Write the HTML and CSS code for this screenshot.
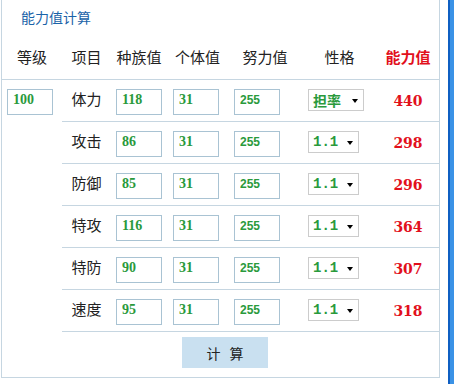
FILE: index.html
```html
<!DOCTYPE html>
<html>
<head>
    <title>能力值计算</title>
	<link rel="stylesheet" href="styles.css">
</head>
<body>
	<div class="page">
		<div class="panel">
			<div class="title">能力值计算</div>
			<div class="calc">
				<div class="hd">等级</div>
				<div class="hd">项目</div>
				<div class="hd">种族值</div>
				<div class="hd">个体值</div>
				<div class="hd">努力值</div>
				<div class="hd">性格</div>
				<div class="hd red">能力值</div>

				<div class="lv"><input class="num serif" value="100"></div>

				<div class="name">体力</div>
				<div class="c3"><input class="num serif" value="118"></div>
				<div class="c4"><input class="num serif" value="31"></div>
				<div class="c5"><input class="num sans" value="255"></div>
				<div class="c6"><div class="sel wide"><span class="cn">担率</span></div></div>
				<div class="val">440</div>

				<div class="name">攻击</div>
				<div class="c3"><input class="num serif" value="86"></div>
				<div class="c4"><input class="num serif" value="31"></div>
				<div class="c5"><input class="num sans" value="255"></div>
				<div class="c6"><div class="sel">1.1</div></div>
				<div class="val">298</div>

				<div class="name">防御</div>
				<div class="c3"><input class="num serif" value="85"></div>
				<div class="c4"><input class="num serif" value="31"></div>
				<div class="c5"><input class="num sans" value="255"></div>
				<div class="c6"><div class="sel">1.1</div></div>
				<div class="val">296</div>

				<div class="name">特攻</div>
				<div class="c3"><input class="num serif" value="116"></div>
				<div class="c4"><input class="num serif" value="31"></div>
				<div class="c5"><input class="num sans" value="255"></div>
				<div class="c6"><div class="sel">1.1</div></div>
				<div class="val">364</div>

				<div class="name">特防</div>
				<div class="c3"><input class="num serif" value="90"></div>
				<div class="c4"><input class="num serif" value="31"></div>
				<div class="c5"><input class="num sans" value="255"></div>
				<div class="c6"><div class="sel">1.1</div></div>
				<div class="val">307</div>

				<div class="name">速度</div>
				<div class="c3"><input class="num serif" value="95"></div>
				<div class="c4"><input class="num serif" value="31"></div>
				<div class="c5"><input class="num sans" value="255"></div>
				<div class="c6"><div class="sel">1.1</div></div>
				<div class="val">318</div>
			</div>
			<div class="actions">
				<button id="calc">计 算</button>
			</div>
		</div>
		<div class="edge"></div>
	</div>
</body>
</html>
```

FILE: styles.css
```css
	body{
	  margin:0;
	  background:#fff;
	  font-family:"Noto Sans CJK SC", "Liberation Sans", sans-serif;
	  color:#222;
	}
	.page{
	  display:flex;
	  height:384px;
	  overflow:hidden;
	}
	.panel{
	  margin-left:1px;
	  width:437px;
	  height:377px;
	  border:1px solid #c6d6e1;
	  border-top:none;
	}
	.edge{
	  margin-left:8px;
	  width:6px;
	  height:384px;
	  background:linear-gradient(to right, #0f5fc2 0 2px, #3a92e6 2px);
	}
	.title{
	  height:34px;
	  line-height:34px;
	  padding-left:19px;
	  font-size:14px;
	  color:#1b63a8;
	}
	.calc{
	  display:grid;
	  grid-template-columns:60px 49px 56px 61px 74px 75px 62px;
	  grid-template-rows:46px repeat(6, 42px);
	}
	.calc > div{
	  box-sizing:border-box;
	}
	.hd{
	  border-bottom:1px solid #c6d6e1;
	  text-align:center;
	  font-size:15px;
	  line-height:20px;
	  padding-top:13px;
	  color:#222;
	}
	.red{
	  color:#e2101c;
	  font-weight:bold;
	}
	.lv{
	  grid-row:2 / span 6;
	  padding:5px 0 0 5px;
	}
	.name, .c3, .c4, .c5, .c6, .val{
	  border-bottom:1px solid #c6d6e1;
	}
	.name{
	  text-align:center;
	  font-size:15px;
	  line-height:20px;
	  padding-top:9px;
	}
	.c3{ padding:5px 0 0 5px; }
	.c4{ padding:5px 0 0 6px; }
	.c5{ padding:5px 0 0 6px; }
	.c6{ padding:9px 0 0 6px; }
	.val{
	  text-align:center;
	  padding-top:11px;
	  line-height:20px;
	  font-family:"DejaVu Serif", serif;
	  font-weight:bold;
	  font-size:14px;
	  color:#e2101c;
	}
	input.num{
	  box-sizing:border-box;
	  width:46px;
	  height:26px;
	  margin:0;
	  padding:0 0 4px 5px;
	  border:1px solid #a9c3d3;
	  background:#fff;
	  color:#2a9a3c;
	  outline:none;
	}
	input.serif{
	  font-family:"Liberation Serif", serif;
	  font-weight:bold;
	  font-size:14px;
	}
	input.sans{
	  font-family:"Liberation Sans", sans-serif;
	  font-weight:bold;
	  font-size:12px;
	}
	.sel{
	  position:relative;
	  box-sizing:border-box;
	  width:51px;
	  height:22px;
	  line-height:20px;
	  padding-left:4px;
	  border:1px solid #cccccc;
	  background:#fff;
	  color:#2a9a3c;
	  font-family:"Liberation Mono", monospace;
	  font-weight:bold;
	  font-size:14px;
	}
	.sel.wide{
	  width:56px;
	}
	.sel .cn{
	  font-family:"Noto Sans CJK SC", sans-serif;
	  font-size:14px;
	}
	.sel::after{
	  content:"";
	  position:absolute;
	  right:5px;
	  top:9px;
	  border-left:3px solid transparent;
	  border-right:3px solid transparent;
	  border-top:4px solid #000;
	}
	.actions{
	  padding:5px 0 0 180px;
	}
	button{
	  width:86px;
	  height:31px;
	  border:none;
	  background:#c9e0f0;
	  color:#222;
	  font-family:"Noto Sans CJK SC", sans-serif;
	  font-size:14px;
	  word-spacing:6px;
	  padding:0;
	}
```
